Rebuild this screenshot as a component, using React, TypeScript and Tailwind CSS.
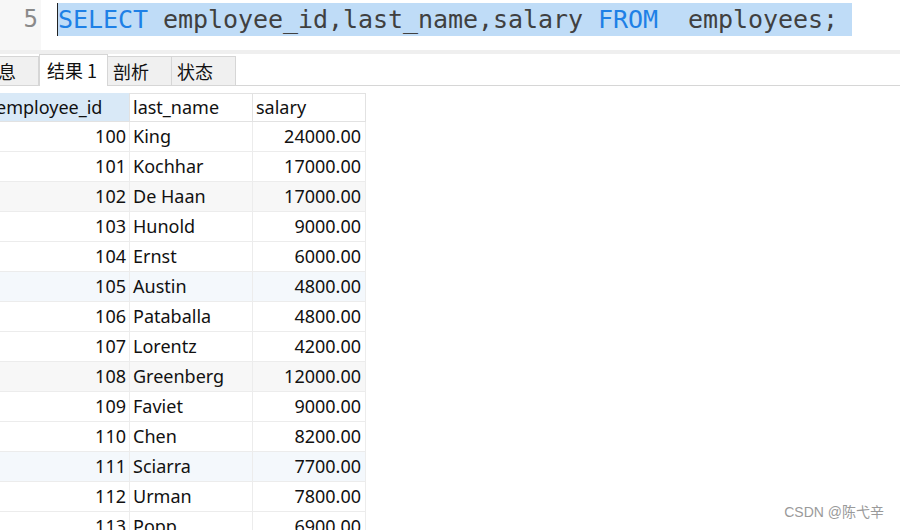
const rows = [
  { id: 100, name: 'King', salary: '24000.00', bg: 'bg-white' },
  { id: 101, name: 'Kochhar', salary: '17000.00', bg: 'bg-white' },
  { id: 102, name: 'De Haan', salary: '17000.00', bg: 'bg-[#f7f7f7]' },
  { id: 103, name: 'Hunold', salary: '9000.00', bg: 'bg-white' },
  { id: 104, name: 'Ernst', salary: '6000.00', bg: 'bg-white' },
  { id: 105, name: 'Austin', salary: '4800.00', bg: 'bg-[#f4f8fc]' },
  { id: 106, name: 'Pataballa', salary: '4800.00', bg: 'bg-white' },
  { id: 107, name: 'Lorentz', salary: '4200.00', bg: 'bg-white' },
  { id: 108, name: 'Greenberg', salary: '12000.00', bg: 'bg-[#f7f7f7]' },
  { id: 109, name: 'Faviet', salary: '9000.00', bg: 'bg-white' },
  { id: 110, name: 'Chen', salary: '8200.00', bg: 'bg-white' },
  { id: 111, name: 'Sciarra', salary: '7700.00', bg: 'bg-[#f4f8fc]' },
  { id: 112, name: 'Urman', salary: '7800.00', bg: 'bg-white' },
  { id: 113, name: 'Popp', salary: '6900.00', bg: 'bg-white' },
];

function Tab({ label, active }: { label: string; active?: boolean }) {
  if (active) {
    return (
      <div className="w-[69px] h-[32px] shrink-0 bg-white border border-b-0 border-[#d6d6d6] px-[7px] flex items-center text-[18px] text-[#111] -mb-px">
        {label}
      </div>
    );
  }
  return (
    <div className="w-[64px] h-[29px] shrink-0 bg-[#f0f0f0] border border-b-0 border-l-0 border-[#d6d6d6] px-[5px] flex items-center text-[18px] text-[#111]">
      {label}
    </div>
  );
}

export default function App() {
  return (
    <div className="w-[900px] h-[530px] bg-white relative overflow-hidden">
      {/* editor */}
      <div className="flex h-[50px]">
        <div className="w-[41px] bg-[#f7f7f7] flex justify-end pr-[3px] pt-[3px]">
          <span className="font-['DejaVu_Sans_Mono',monospace] text-[24px] leading-[33px] text-[#8a8a8a]">5</span>
        </div>
        <div className="pl-[16px] pt-[3px]">
          <div className="h-[33px] bg-[#bfdcf7] border-l border-[#222] flex items-center pr-[14px] font-['DejaVu_Sans_Mono',monospace] text-[25px] tracking-[-0.05px] leading-[33px] text-[#404040] whitespace-pre">
            <span className="text-[#1e80e6]">SELECT</span>
            <span> employee_id,last_name,salary </span>
            <span className="text-[#1e80e6]">FROM</span>
            <span>  employees;</span>
          </div>
        </div>
      </div>
      <div className="h-[4px] bg-[#efefef]" />

      {/* result tabs */}
      <div className="h-[32px] border-b border-[#d6d6d6] flex items-end font-['Noto_Sans_CJK_SC',sans-serif]">
        <div className="flex items-end -ml-[25px]">
          <Tab label="信息" />
          <Tab label="结果 1" active />
          <Tab label="剖析" />
          <Tab label="状态" />
        </div>
      </div>

      {/* grid */}
      <div className="mt-[7px] w-[366px] font-['Noto_Sans','Noto_Sans_CJK_SC',sans-serif] text-[18px] text-[#111]">
        <div className="flex h-[29px] border-b border-[#e2e2e2]">
          <div className="w-[130px] bg-[#d9e9f7] border-r border-[#e2e2e2] flex items-center overflow-hidden">
            <span className="-ml-[4px] whitespace-nowrap">employee_id</span>
          </div>
          <div className="w-[123px] border-r border-[#e2e2e2] border-t flex items-center pl-[3px]">last_name</div>
          <div className="w-[113px] border-r border-t border-[#e2e2e2] flex items-center pl-[3px]">salary</div>
        </div>
        {rows.map((r) => (
          <div key={r.id} className={`flex h-[30px] border-b border-[#ececec] ${r.bg}`}>
            <div className="w-[130px] border-r border-[#ececec] flex items-center justify-end pr-[3px]">{r.id}</div>
            <div className="w-[123px] border-r border-[#ececec] flex items-center pl-[3px]">{r.name}</div>
            <div className="w-[113px] border-r border-[#ececec] flex items-center justify-end pr-[4px]">{r.salary}</div>
          </div>
        ))}
      </div>

      <div className="absolute right-[16px] bottom-[7px] text-[14px] text-[#9a9a9a] font-['Liberation_Sans','Noto_Sans_CJK_SC',sans-serif]">
        CSDN @陈弋辛
      </div>
    </div>
  );
}
